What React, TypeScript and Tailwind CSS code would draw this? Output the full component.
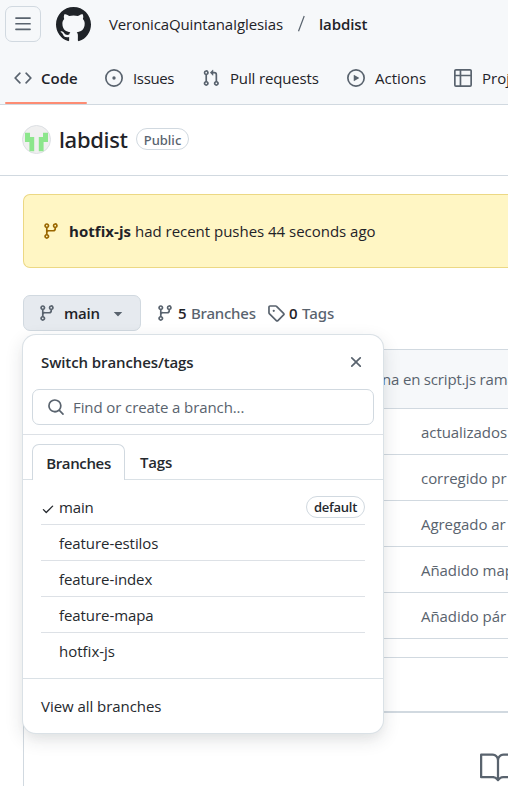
import type { ReactNode } from "react";
import { GoBook } from "react-icons/go";

const paths = {
  bars: "M1 2.75A.75.75 0 0 1 1.75 2h12.5a.75.75 0 0 1 0 1.5H1.75A.75.75 0 0 1 1 2.75Zm0 5A.75.75 0 0 1 1.75 7h12.5a.75.75 0 0 1 0 1.5H1.75A.75.75 0 0 1 1 7.75ZM1.75 12h12.5a.75.75 0 0 1 0 1.5H1.75a.75.75 0 0 1 0-1.5Z",
  github:
    "M8 0c4.42 0 8 3.58 8 8a8.013 8.013 0 0 1-5.45 7.59c-.4.08-.55-.17-.55-.38 0-.27.01-1.13.01-2.2 0-.75-.25-1.23-.54-1.48 1.78-.2 3.65-.88 3.65-3.95 0-.88-.31-1.59-.82-2.15.08-.2.36-1.02-.08-2.12 0 0-.67-.22-2.2.82-.64-.18-1.32-.27-2-.27-.68 0-1.36.09-2 .27-1.53-1.03-2.2-.82-2.2-.82-.44 1.1-.16 1.92-.08 2.12-.51.56-.82 1.28-.82 2.15 0 3.06 1.86 3.75 3.64 3.95-.23.2-.44.55-.51 1.07-.46.21-1.61.55-2.33-.66-.15-.24-.6-.83-1.23-.82-.67.01-.27.38.01.53.34.19.73.9.82 1.13.16.45.68 1.31 2.69.94 0 .67.01 1.3.01 1.49 0 .21-.15.45-.55.38A7.995 7.995 0 0 1 0 8c0-4.42 3.58-8 8-8Z",
  code: "m11.28 3.22 4.25 4.25a.75.75 0 0 1 0 1.06l-4.25 4.25a.749.749 0 0 1-1.275-.326.749.749 0 0 1 .215-.734L13.94 8l-3.72-3.72a.749.749 0 0 1 .326-1.275.749.749 0 0 1 .734.215Zm-6.56 0a.751.751 0 0 1 1.042.018.751.751 0 0 1 .018 1.042L2.06 8l3.72 3.72a.749.749 0 0 1-.326 1.275.749.749 0 0 1-.734-.215L.47 8.53a.75.75 0 0 1 0-1.06Z",
  issue:
    "M8 9.5a1.5 1.5 0 1 0 0-3 1.5 1.5 0 0 0 0 3ZM8 0a8 8 0 1 1 0 16A8 8 0 0 1 8 0ZM1.5 8a6.5 6.5 0 1 0 13 0 6.5 6.5 0 0 0-13 0Z",
  pull: "M1.5 3.25a2.25 2.25 0 1 1 3 2.122v5.256a2.251 2.251 0 1 1-1.5 0V5.372A2.25 2.25 0 0 1 1.5 3.25Zm5.677-.177L9.573.677A.25.25 0 0 1 10 .854V2.5h1A2.5 2.5 0 0 1 13.5 5v5.628a2.251 2.251 0 1 1-1.5 0V5a1 1 0 0 0-1-1h-1v1.646a.25.25 0 0 1-.427.177L7.177 3.427a.25.25 0 0 1 0-.354ZM3.75 2.5a.75.75 0 1 0 0 1.5.75.75 0 0 0 0-1.5Zm0 9.5a.75.75 0 1 0 0 1.5.75.75 0 0 0 0-1.5Zm8.25.75a.75.75 0 1 0 1.5 0 .75.75 0 0 0-1.5 0Z",
  play: "M8 0a8 8 0 1 1 0 16A8 8 0 0 1 8 0ZM1.5 8a6.5 6.5 0 1 0 13 0 6.5 6.5 0 0 0-13 0Zm4.879-2.773 4.264 2.559a.25.25 0 0 1 0 .428l-4.264 2.559A.25.25 0 0 1 6 10.559V5.442a.25.25 0 0 1 .379-.215Z",
  table:
    "M0 1.75C0 .784.784 0 1.75 0h12.5C15.216 0 16 .784 16 1.75v12.5A1.75 1.75 0 0 1 14.25 16H1.75A1.75 1.75 0 0 1 0 14.25ZM6.5 6.5v8h7.75a.25.25 0 0 0 .25-.25V6.5Zm8-1.5V1.75a.25.25 0 0 0-.25-.25H6.5V5Zm-13 1.5v7.75c0 .138.112.25.25.25H5v-8ZM5 5V1.5H1.75a.25.25 0 0 0-.25.25V5Z",
  branch:
    "M9.5 3.25a2.25 2.25 0 1 1 3 2.122V6A2.5 2.5 0 0 1 10 8.5H6a1 1 0 0 0-1 1v1.128a2.251 2.251 0 1 1-1.5 0V5.372a2.25 2.25 0 1 1 1.5 0v1.836A2.493 2.493 0 0 1 6 7h4a1 1 0 0 0 1-1v-.628A2.25 2.25 0 0 1 9.5 3.25Zm-6 0a.75.75 0 1 0 1.5 0 .75.75 0 0 0-1.5 0Zm8.25-.75a.75.75 0 1 0 0 1.5.75.75 0 0 0 0-1.5ZM4.25 12a.75.75 0 1 0 0 1.5.75.75 0 0 0 0-1.5Z",
  tag: "M1 7.775V2.75C1 1.784 1.784 1 2.75 1h5.025c.464 0 .91.184 1.238.513l6.25 6.25a1.75 1.75 0 0 1 0 2.474l-5.026 5.026a1.75 1.75 0 0 1-2.474 0l-6.25-6.25A1.752 1.752 0 0 1 1 7.775Zm1.5 0c0 .066.026.13.073.177l6.25 6.25a.25.25 0 0 0 .354 0l5.025-5.025a.25.25 0 0 0 0-.354l-6.25-6.25a.25.25 0 0 0-.177-.073H2.75a.25.25 0 0 0-.25.25ZM6 5a1 1 0 1 1 0 2 1 1 0 0 1 0-2Z",
  search:
    "M10.68 11.74a6 6 0 0 1-7.922-8.982 6 6 0 0 1 8.982 7.922l3.04 3.04a.749.749 0 0 1-.326 1.275.749.749 0 0 1-.734-.215ZM11.5 7a4.499 4.499 0 1 0-8.997 0A4.499 4.499 0 0 0 11.5 7Z",
  x: "M3.72 3.72a.75.75 0 0 1 1.06 0L8 6.94l3.22-3.22a.749.749 0 0 1 1.275.326.749.749 0 0 1-.215.734L9.06 8l3.22 3.22a.749.749 0 0 1-.326 1.275.749.749 0 0 1-.734-.215L8 9.06l-3.22 3.22a.751.751 0 0 1-1.042-.018.751.751 0 0 1-.018-1.042L6.94 8 3.72 4.78a.75.75 0 0 1 0-1.06Z",
  check:
    "M13.78 4.22a.75.75 0 0 1 0 1.06l-7.25 7.25a.75.75 0 0 1-1.06 0L2.22 9.28a.751.751 0 0 1 .018-1.042.751.751 0 0 1 1.042-.018L6 10.94l6.72-6.72a.75.75 0 0 1 1.06 0Z",
  caret: "m4.427 7.427 3.396 3.396a.25.25 0 0 0 .354 0l3.396-3.396A.25.25 0 0 0 11.396 7H4.604a.25.25 0 0 0-.177.427Z",
};

function Icon({ name, className = "size-[18px] text-[#59636e]" }: { name: keyof typeof paths; className?: string }) {
  return (
    <svg viewBox="0 0 16 16" fill="currentColor" className={`shrink-0 ${className}`}>
      <path fillRule={name === "github" ? "evenodd" : "nonzero"} d={paths[name]} />
    </svg>
  );
}

function NavTab({ icon, children, className }: { icon: keyof typeof paths; children: ReactNode; className: string }) {
  return (
    <a className={`flex h-full shrink-0 items-center pt-[9px] ${className}`}>
      <Icon name={icon} />
      {children}
    </a>
  );
}

function Header() {
  return (
    <header className="flex h-[105px] flex-col border-b border-[#d1d9e0] bg-[#f6f8fa]">
      <div className="flex h-[42px] shrink-0 items-start pt-[6px] pl-[5px]">
        <button className="flex size-9 items-center justify-center rounded-[7px] border border-[#d1d9e0]">
          <Icon name="bars" />
        </button>
        <Icon name="github" className="ml-[15px] mt-px size-[35px] text-[#1f2328]" />
        <div className="ml-[18px] flex h-9 items-center">
          <span className="w-[174px] tracking-[-0.13px]">VeronicaQuintanaIglesias</span>
          <svg viewBox="0 0 8 18" className="ml-[14px] h-[18px] w-2">
            <path d="M1.5 16.2L7.2 1" stroke="#59636e" strokeWidth="1.2" />
          </svg>
          <span className="ml-[14px] font-semibold tracking-[-0.1px]">labdist</span>
        </div>
      </div>
      <nav className="flex h-[62px] items-stretch pl-[5px]">
        <div className="flex w-[82px] shrink-0 flex-col">
          <a className="flex h-[60px] items-center gap-[9px] pt-[11px] pl-[9px] font-semibold">
            <Icon name="code" />
            Code
          </a>
          <span className="h-[2px] rounded-full bg-[#fd8c73]" />
        </div>
        <NavTab icon="issue" className="ml-[18px] w-[97px] gap-[10px] tracking-[-0.35px]">Issues</NavTab>
        <NavTab icon="pull" className="w-[145px] gap-[10px] tracking-[-0.15px]">Pull requests</NavTab>
        <NavTab icon="play" className="w-[107px] gap-[10px]">Actions</NavTab>
        <NavTab icon="table" className="gap-[10px]">Proj</NavTab>
      </nav>
    </header>
  );
}

function Title() {
  return (
    <div className="flex h-[71px] items-center border-b border-[#d1d9e0] pb-[2px] pl-[22px]">
      <svg viewBox="0 0 29 29" className="size-[29px]">
        <circle cx="14.5" cy="14.5" r="14" fill="#f0f0f0" stroke="#dcdfe3" />
        <path d="M3 7.8H8V12H12.2V26.2H7.4V17H3ZM21 7.8H26V17H21.6V26.2H16.8V12H21Z" fill="#8ce68c" />
      </svg>
      <h1 className="ml-2 w-[69px] font-[Noto_Sans] text-[22px] font-medium tracking-[-0.32px]">labdist</h1>
      <span className="ml-2 flex h-[22px] w-[53px] items-center justify-center rounded-full border border-[#d1d9e0] pt-[2px] font-[Noto_Sans] text-[13px] font-medium text-[#59636e]">
        Public
      </span>
    </div>
  );
}

function BranchMenu() {
  return (
    <div className="absolute top-[39px] -left-px z-10 flex h-[400px] w-[362px] flex-col rounded-[14px] border border-[#d1d9e0]/80 bg-white text-[#25292e] shadow-[0_6px_12px_-3px_rgba(37,41,46,0.04),0_6px_18px_0_rgba(37,41,46,0.12)]">
      <div className="flex h-[54px] shrink-0 items-center justify-between pr-[18px] pl-[18px]">
        <h2 className="font-semibold tracking-[-0.1px]">Switch branches/tags</h2>
        <Icon name="x" />
      </div>
      <div className="mx-[9px] flex h-9 shrink-0 items-center gap-2 rounded-[7px] border border-[#d1d9e0] pl-[14px] text-[#59636e]">
        <Icon name="search" />
        <span className="tracking-[-0.1px]">Find or create a branch...</span>
      </div>
      <div className="mt-[9px] flex h-[46px] shrink-0 items-end border-t border-[#dde1e6]">
        <div className="h-full w-[9px] border-b border-[#d1d9e0]/80" />
        <div className="flex h-[36px] w-[93px] items-center justify-center rounded-t-[7px] border border-b-0 border-[#d1d9e0] font-semibold tracking-[-0.35px]">
          Branches
        </div>
        <div className="flex h-[36px] flex-1 items-center border-b border-[#d1d9e0]/80 pt-px pl-[15px] font-semibold tracking-[-0.2px]">Tags</div>
      </div>
      <ul className="mx-[18px] flex flex-col pt-[9px]">
        <li className="flex h-9 items-center border-b border-[#dde1e6]">
          <Icon name="check" className="mt-1 size-[14px] text-[#25292e]" />
          <span className="ml-1 flex-1 tracking-[-0.15px]">main</span>
          <span className="flex h-[22px] w-[59px] items-center justify-center rounded-full border border-[#d1d9e0] text-[13px] font-semibold tracking-[-0.25px]">
            default
          </span>
        </li>
        {["feature-estilos", "feature-index", "feature-mapa"].map((b) => (
          <li key={b} className="flex h-9 items-center border-b border-[#dde1e6] pl-[18px] tracking-[-0.07px]">
            {b}
          </li>
        ))}
        <li className="flex h-9 items-center pl-[18px]">hotfix-js</li>
      </ul>
      <div className="mt-[9px] flex flex-1 items-center border-t border-[#d1d9e0]/80 pl-[18px] tracking-[-0.05px]">View all branches</div>
    </div>
  );
}

export default function App() {
  return (
    <div className="h-[786px] w-[508px] overflow-hidden bg-white font-['Open_Sans','Noto_Sans',sans-serif] text-[15px] leading-5 whitespace-nowrap text-[#1f2328]">
      <Header />
      <Title />
      <main className="pl-[23px]">
        <div className="mt-[18px] flex h-[74px] items-center rounded-l-[7px] border border-r-0 border-[#ecd884] bg-[#fff6c4] pl-[18px]">
          <Icon name="branch" className="size-[18px] text-[#9a6700]" />
          <span className="ml-[9px] w-[66px] font-bold tracking-[0.05px]">hotfix-js</span>
          <span className="tracking-[-0.02px]">had recent pushes 44 seconds ago</span>
        </div>

        <div className="relative mt-[27px] flex h-9 items-center">
          <button className="flex h-9 w-[118px] items-center rounded-[7px] border border-[#d1d9e0] bg-[#e6eaef] pl-[14px]">
            <Icon name="branch" />
            <span className="ml-2 w-[45px] text-left font-semibold tracking-[-0.2px]">main</span>
            <Icon name="caret" />
          </button>
          <div className="ml-[15px] flex w-[111px] items-center">
            <Icon name="branch" />
            <span className="ml-1 w-[13px] font-semibold">5</span>
            <span className="font-[Noto_Sans] font-medium tracking-[-0.22px] text-[#59636e]">Branches</span>
          </div>
          <div className="flex items-center">
            <Icon name="tag" />
            <span className="ml-1 w-[13px] font-semibold">0</span>
            <span className="font-[Noto_Sans] font-medium text-[#59636e]">Tags</span>
          </div>
          <BranchMenu />
        </div>

        <div className="mt-[18px] h-[290px] border-l border-[#d1d9e0] text-[#59636e]">
          <div className="flex h-[60px] items-center border-y border-[#d1d9e0] bg-[#f6f8fa] pl-[358px] tracking-[-0.18px]">
            na en script.js rama
          </div>
          {["actualizados", "corregido pr", "Agregado ar", "Añadido map", "Añadido pár"].map((m) => (
            <div key={m} className="flex h-[46px] items-center border-b border-[#d1d9e0] pt-px pl-[397px] tracking-[-0.06px]">
              {m}
            </div>
          ))}
        </div>

        <div className="mt-[18px] h-[129px] border-t border-l border-[#d1d9e0]">
          <div className="h-[55px] border-b-2 border-[#d1d9e0]" />
          <GoBook className="mt-9 ml-[456px] size-9 text-[#59636e]" />
        </div>
      </main>
    </div>
  );
}
